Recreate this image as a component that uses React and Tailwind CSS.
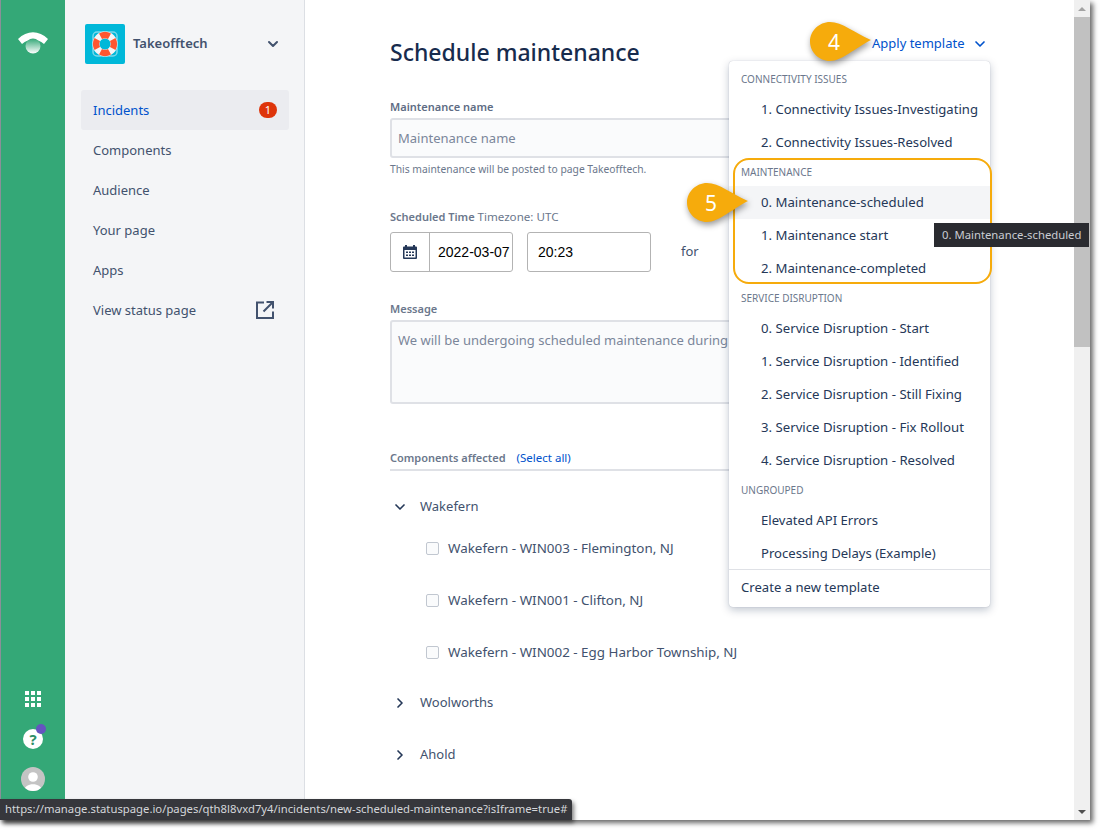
import React from "react";
import { ChevronDown, ChevronRight } from "lucide-react";

const navItems = ["Components", "Audience", "Your page", "Apps"];

const menuGroups = [
  { title: "Connectivity Issues", size: "text-[13.100px]", items: ["1. Connectivity Issues-Investigating", "2. Connectivity Issues-Resolved"] },
  { title: "Maintenance", size: "text-[13.200px]", items: ["0. Maintenance-scheduled", "1. Maintenance start", "2. Maintenance-completed"] },
  {
    title: "Service Disruption",
    size: "text-[13.200px]",
    items: [
      "0. Service Disruption - Start",
      "1. Service Disruption - Identified",
      "2. Service Disruption - Still Fixing",
      "3. Service Disruption - Fix Rollout",
      "4. Service Disruption - Resolved",
    ],
  },
  { title: "Ungrouped", size: "text-[13.100px]", items: ["Elevated API Errors", "Processing Delays (Example)"] },
];

const stores = ["Wakefern - WIN003 - Flemington, NJ", "Wakefern - WIN001 - Clifton, NJ", "Wakefern - WIN002 - Egg Harbor Township, NJ"];

const LifeRing = () => (
  <svg width="40" height="40" viewBox="0 0 40 40" className="rounded-[2px]">
    <rect width="40" height="40" fill="#00b8d9" />
    <rect x="8" y="8" width="24" height="24" rx="4" fill="none" stroke="#79d8ea" strokeWidth="1.5" />
    <circle cx="20" cy="20" r="9" fill="none" stroke="#f4f5f7" strokeWidth="7" />
    <path d="M14 9.500 A12.500 12.500 0 0 1 26 9.500 L23 15 A6 6 0 0 0 17 15 Z" fill="#ff5630" />
    <path d="M14 30.500 A12.500 12.500 0 0 0 26 30.500 L23 25 A6 6 0 0 1 17 25 Z" fill="#ff5630" />
    <path d="M9.500 14 A12.500 12.500 0 0 0 9.500 26 L15 23 A6 6 0 0 1 15 17 Z" fill="#ff5630" />
    <path d="M30.500 14 A12.500 12.500 0 0 1 30.500 26 L25 23 A6 6 0 0 0 25 17 Z" fill="#ff5630" />
  </svg>
);

const Logo = () => (
  <svg width="32" height="24" viewBox="0 0 32 24">
    <defs>
      <linearGradient id="dot" x1="0" y1="0" x2="0" y2="1">
        <stop offset="0" stopColor="#34a877" />
        <stop offset="1" stopColor="#ffffff" />
      </linearGradient>
    </defs>
    <path d="M1 9 C10 0 22 0 31 9 L27 14 C20 8 12 8 5 14 Z" fill="#fff" />
    <circle cx="16" cy="16" r="7.500" fill="url(#dot)" />
  </svg>
);

const ExternalLink = () => (
  <svg width="20" height="20" viewBox="0 0 20 20" fill="none" stroke="#42526e" strokeWidth="2">
    <path d="M9 2.500 H2 V18 H18 V11.500" />
    <path d="M8.500 11.500 L17.500 2.500 M11.500 2 H18 V8.500" />
  </svg>
);

const Calendar = () => (
  <svg width="16" height="16" viewBox="0 0 16 16">
    <path d="M3 1h2v1.500h6V1h2v1.500h1a1 1 0 0 1 1 1V14a1 1 0 0 1-1 1H2a1 1 0 0 1-1-1V3.500a1 1 0 0 1 1-1h1Z" fill="#253858" />
    <rect x="2.500" y="6" width="11" height="7.500" fill="#fff" />
    <path d="M4 7.500h2v1.500H4Zm3 0h2v1.500H7Zm3 0h2v1.500h-2ZM4 10.500h2V12H4Zm3 0h2V12H7Zm3 0h2V12h-2Z" fill="#253858" />
  </svg>
);

const Avatar = () => (
  <svg width="24" height="24" viewBox="0 0 24 24">
    <defs>
      <clipPath id="avatarClip">
        <circle cx="12" cy="12" r="12" />
      </clipPath>
    </defs>
    <g clipPath="url(#avatarClip)">
      <rect width="24" height="24" fill="#c4c4c4" />
      <circle cx="12" cy="10" r="4.800" fill="#fff" />
      <path d="M3 24 C3 15 21 15 21 24 Z" fill="#fff" />
    </g>
  </svg>
);

// orange teardrop callout pointing right
const Callout = ({ number, className }) => (
  <div className={`absolute w-[64px] h-[42px] ${className}`}>
    <svg width="64" height="42" viewBox="0 0 64 42" className="absolute inset-0 drop-shadow-[1px_3px_3px_rgba(0,0,0,0.4)]">
      <path d="M21 1 C33 1 46 12 62 19 C46 27 33 40 21 40 C10 40 1 31 1 20.500 C1 10 10 1 21 1 Z" fill="#f6ab0c" />
    </svg>
    <span className="absolute left-0 top-0 w-[50px] h-[43px] flex items-center justify-center text-white text-[21px]">{number}</span>
  </div>
);

export default function App() {
  return (
    <div className="relative w-[1105px] h-[835px] overflow-hidden bg-white font-['Noto_Sans','Liberation_Sans',sans-serif] text-[#253858]">
      <div className="flex w-[1090px] h-[820px] bg-white shadow-[3px_3px_5px_rgba(0,0,0,0.6)] border-l border-[#8a8f99]">
        {/* app rail */}
        <div className="w-[64px] bg-[#34a877] flex flex-col items-center shrink-0">
          <div className="mt-[30px]">
            <Logo />
          </div>
          <div className="mt-auto mb-[29px] flex flex-col items-center">
            <div className="grid grid-cols-3 gap-[2px] mb-[22px]">
              {Array.from({ length: 9 }).map((_, i) => (
                <div key={i} className="w-[4px] h-[4px] bg-white" />
              ))}
            </div>
            <div className="relative w-[20px] h-[20px] mb-[18px] rounded-full bg-white flex items-center justify-center text-[15px] font-bold text-[#2f8f68]">
              ?
              <span className="absolute -top-[5px] -right-[3px] w-[10px] h-[10px] rounded-full bg-[#6554c0]" />
            </div>
            <Avatar />
          </div>
        </div>

        {/* sidebar */}
        <div className="w-[240px] bg-[#f4f5f7] border-r border-[#dcdfe4] shrink-0 pl-[16px] pr-[15px] pt-[24px]">
          <div className="flex items-center pl-[4px] pr-[8px]">
            <LifeRing />
            <span className="ml-[8px] text-[13px] font-semibold text-[#42526e]">Takeofftech</span>
            <ChevronDown size={16} strokeWidth={3} className="ml-auto text-[#42526e]" />
          </div>
          <div className="mt-[26px] flex flex-col text-[13px] text-[#42526e]">
            <div className="h-[40px] flex items-center justify-between px-[12px] pt-[2px] bg-[#ebecf0] rounded-[3px] text-[#0052cc]">
              Incidents
              <span className="w-[18px] h-[16px] -mt-[2px] rounded-full bg-[#de350b] text-white text-[11px] flex items-center justify-center">1</span>
            </div>
            {navItems.map((item) => (
              <div key={item} className="h-[40px] flex items-center px-[12px] pt-[2px]">
                {item}
              </div>
            ))}
            <div className="h-[40px] flex items-center justify-between pl-[12px] pr-[14px] pt-[2px]">
              View status page
              <span className="-mt-[2px]">
                <ExternalLink />
              </span>
            </div>
          </div>
        </div>

        {/* main form */}
        <div className="flex-1 relative pl-[85px] pt-[36px] min-w-0 overflow-hidden">
          <h1 className="h-[32px] text-[23px] leading-[32px] font-medium text-[#172b4d]">Schedule maintenance</h1>
          <div className="w-[600px]">
            <div className="mt-[31px] text-[11px] leading-[16px] font-semibold text-[#5e6c84]">Maintenance name</div>
            <div className="mt-[3px] h-[40px] px-[6px] pt-[2px] flex items-center bg-[#fafbfc] border-2 border-[#dfe1e6] rounded-[3px] text-[13px] text-[#7a869a]">
              Maintenance name
            </div>
            <div className="mt-[3px] text-[10.300px] leading-[16px] text-[#6b778c]">This maintenance will be posted to page Takeofftech.</div>
            <div className="mt-[32px] text-[11px] leading-[16px] text-[#6b778c]">
              <span className="font-semibold">Scheduled Time</span> <span className="text-[11.600px]">Timezone: UTC</span>
            </div>
            <div className="mt-[7px] flex items-center">
              <div className="w-[123px] h-[40px] flex border border-[#b3b3b3] rounded-[3px] text-[14px] text-black font-['Liberation_Sans',sans-serif]">
                <div className="w-[39px] flex items-center justify-center border-r border-[#b3b3b3]">
                  <Calendar />
                </div>
                <div className="flex items-center pl-[8px]">2022-03-07</div>
              </div>
              <div className="ml-[14px] w-[124px] h-[40px] flex items-center pl-[10px] border border-[#b3b3b3] rounded-[3px] text-[14px] text-black font-['Liberation_Sans',sans-serif]">20:23</div>
              <span className="ml-[30px] text-[13px] text-[#42526e]">for</span>
            </div>
            <div className="mt-[29px] text-[11px] leading-[16px] font-semibold text-[#6b778c]">Message</div>
            <div className="mt-[3px] h-[84px] px-[6px] pt-[8px] bg-[#fafbfc] border-2 border-[#dfe1e6] rounded-[3px] text-[13px] leading-[20px] text-[#7a869a] whitespace-nowrap overflow-hidden">
              We will be undergoing scheduled maintenance during this time.
            </div>
            <div className="mt-[46px] pb-[4px] border-b-2 border-[#dfe1e6] text-[11px] leading-[16px] h-[21px]">
              <span className="font-semibold text-[#6b778c]">Components affected</span>
              <span className="ml-[11px] text-[11.500px] text-[#0052cc]">(Select all)</span>
            </div>
          </div>
          <div className="mt-[26px] text-[13px] text-[#42526e]">
            <div className="h-[20px] flex items-center">
              <ChevronDown size={16} strokeWidth={2.500} className="mr-[12px] ml-[2px] text-[#253858]" />
              Wakefern
            </div>
            <div className="mt-[21px] flex flex-col gap-[32px] pl-[36px] text-[13.400px]">
              {stores.map((store) => (
                <div key={store} className="h-[20px] flex items-center">
                  <span className="w-[13px] h-[13px] mr-[9px] border border-[#c1c7d0] bg-[#fafbfc] rounded-[2px]" />
                  {store}
                </div>
              ))}
            </div>
            <div className="mt-[31px] h-[20px] flex items-center">
              <ChevronRight size={16} strokeWidth={2.500} className="mr-[12px] ml-[2px] text-[#253858]" />
              Woolworths
            </div>
            <div className="mt-[32px] h-[20px] flex items-center">
              <ChevronRight size={16} strokeWidth={2.500} className="mr-[12px] ml-[2px] text-[#253858]" />
              Ahold
            </div>
          </div>
        </div>

        {/* scrollbar */}
        <div className="w-[16px] bg-[#f0f0f0] shrink-0 flex flex-col items-center">
          <div className="h-[17px] flex items-center justify-center">
            <div className="w-0 h-0 border-x-[4px] border-x-transparent border-b-[4px] border-b-[#a3a3a3]" />
          </div>
          <div className="w-full h-[330px] bg-[#c1c1c1]" />
          <div className="mt-auto h-[17px] flex items-center justify-center">
            <div className="w-0 h-0 border-x-[4px] border-x-transparent border-t-[4px] border-t-[#505050]" />
          </div>
        </div>
      </div>

      {/* apply template trigger */}
      <div className="absolute left-[872px] top-[34px] h-[20px] flex items-center text-[13px] text-[#0052cc]">
        Apply template
        <ChevronDown size={16} strokeWidth={2.500} className="ml-[7px] -mt-[1px]" />
      </div>

      {/* dropdown */}
      <div className="absolute left-[729px] top-[61px] w-[261px] h-[546px] bg-white rounded-[4px] shadow-[0_3px_8px_rgba(9,30,66,0.25),0_0_1px_rgba(9,30,66,0.3)] pt-[8px] text-[13px] text-[#253858]">
        {menuGroups.map((group) => (
          <div key={group.title}>
            <div className="h-[20px] pl-[12px] flex items-center text-[10px] uppercase text-[#6b778c]">{group.title}</div>
            <div className={`pt-[4px] pb-[3px] ${group.size}`}>
              {group.items.map((item) => (
                <div key={item} className={`h-[33px] pl-[32px] flex items-center whitespace-nowrap ${item === "0. Maintenance-scheduled" ? "bg-[#f4f5f7]" : ""}`}>
                  {item}
                </div>
              ))}
            </div>
          </div>
        ))}
        <div className="-mt-[4px] border-t border-[#dfe1e6] h-[37px] pl-[12px] flex items-center text-[13.100px]">Create a new template</div>
      </div>

      {/* annotation highlight */}
      <div className="absolute left-[733px] top-[158px] w-[259px] h-[126px] border-2 border-[#f6ab0c] rounded-[16px]" />

      {/* native title tooltip */}
      <div className="absolute left-[934px] top-[223px] w-[155px] h-[24px] bg-[#2a2b30] text-[#c9ccd2] text-[11.300px] flex items-center pl-[8px] whitespace-nowrap">0. Maintenance-scheduled</div>

      <Callout number="4" className="left-[809px] top-[21px]" />
      <Callout number="5" className="left-[686px] top-[182px]" />

      {/* browser status url */}
      <div className="absolute left-0 top-[799px] w-[572px] h-[21px] pl-[5px] flex items-center bg-[#36373c] rounded-tr-[3px] text-[#d4d6da] text-[11.300px] whitespace-nowrap shadow-[2px_3px_4px_rgba(0,0,0,0.5)]">
        https://manage.statuspage.io/pages/qth8l8vxd7y4/incidents/new-scheduled-maintenance?isIframe=true#
      </div>
    </div>
  );
}
